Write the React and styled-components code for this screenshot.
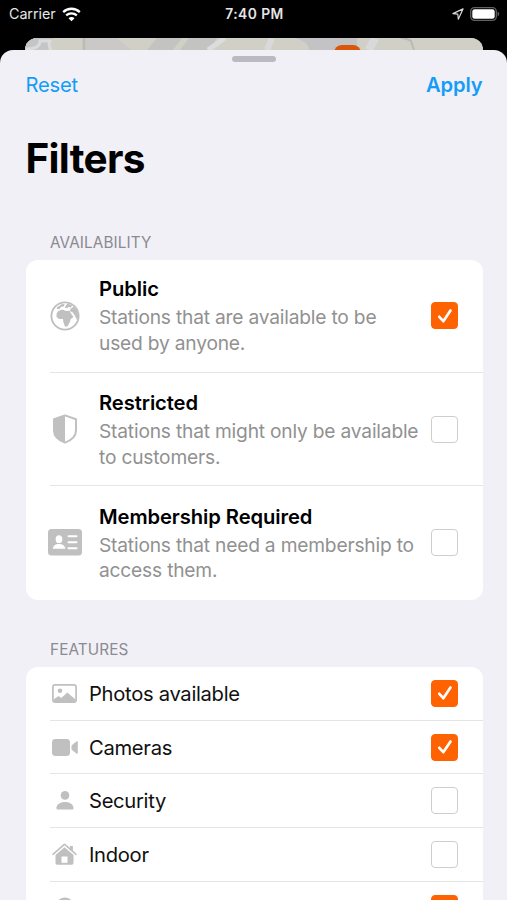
import styled, { createGlobalStyle } from "styled-components";

const GlobalStyle = createGlobalStyle`
  * {
    box-sizing: border-box;
  }

  body {
    margin: 0;
    background: #000;
    font-family: Inter, "Liberation Sans", sans-serif;
    overflow: hidden;
  }
`;

const Screen = styled.div`
  width: 507px;
  height: 900px;
  overflow: hidden;
  background: #000;
  display: flex;
  flex-direction: column;
`;

const StatusBar = styled.div`
  height: 38px;
  flex: none;
  padding: 4px 7px 0 9px;
  display: grid;
  grid-template-columns: 1fr auto 1fr;
  align-items: start;
  color: #e6e6e6;
  font-size: 14.3px;
  line-height: 20px;
`;

const Carrier = styled.div`
  display: flex;
  align-items: center;
  gap: 6px;
  letter-spacing: -0.05px;
`;

const Clock = styled.div`
  font-weight: 600;
  font-size: 13.8px;
  letter-spacing: 0.45px;
`;

const StatusIcons = styled.div`
  display: flex;
  align-items: center;
  justify-content: flex-end;
  gap: 6px;
  height: 19px;
`;

const MapStrip = styled.div`
  height: 24px;
  flex: none;
  margin: 0 24px 0 25px;
  border-radius: 12px 12px 0 0;
  overflow: hidden;
  background: #d3d3c8;
`;

const Sheet = styled.main`
  flex: 1;
  margin-top: -12px;
  min-height: 0;
  position: relative;
  background: #f1f0f6;
  border-radius: 13px 13px 0 0;
  padding: 6px 24.5px 0 25.5px;
  display: flex;
  flex-direction: column;
  overflow: hidden;
`;

const Grabber = styled.div`
  width: 44px;
  height: 6px;
  flex: none;
  border-radius: 3px;
  background: #bbbac2;
  align-self: center;
`;

const Toolbar = styled.div`
  display: flex;
  justify-content: space-between;
  height: 26px;
  margin-top: 10px;
  flex: none;
`;

const TextButton = styled.button`
  border: 0;
  padding: 0;
  background: none;
  font-family: inherit;
  font-size: 20.2px;
  line-height: 26px;
  color: #149cf8;
  font-weight: ${(props) => (props.$strong ? 600 : 400)};
  letter-spacing: ${(props) => (props.$strong ? "-0.15px" : "-0.2px")};
`;

const Title = styled.h1`
  margin: 35px 0 0;
  flex: none;
  font-size: 40.5px;
  line-height: 52px;
  font-weight: 700;
  letter-spacing: -0.7px;
`;

const SectionTitle = styled.h2`
  margin: ${(props) => props.$top}px 0 0 24.5px;
  height: 27px;
  flex: none;
  font-size: 15.3px;
  line-height: 20px;
  font-weight: 400;
  letter-spacing: 0.1px;
  color: #8b8a90;
`;

const Card = styled.div`
  flex: none;
  background: #fff;
  border-radius: 12px;
  padding-left: 24.5px;
`;

const Row = styled.label`
  display: flex;
  align-items: center;
  height: ${(props) => (props.$compact ? 53.7 : 113.4)}px;
  padding-right: 24.5px;
  border-bottom: 1px solid #e5e5e8;

  &:last-child {
    border-bottom: 0;
  }
`;

const IconSlot = styled.span`
  width: 29px;
  flex: none;
  display: flex;
  justify-content: center;
  color: #c0c0c0;
  margin-right: ${(props) => (props.$compact ? 10 : 20)}px;

  svg {
    flex: none;
  }
`;

const Texts = styled.span`
  flex: 1;
  min-width: 0;
  padding-top: 2px;
`;

const Name = styled.span`
  display: block;
  font-size: 20.2px;
  line-height: 26px;
  font-weight: 600;
  letter-spacing: -0.08px;
  margin-bottom: 3px;
`;

const Desc = styled.span`
  display: block;
  font-size: 19.2px;
  line-height: 25.7px;
  letter-spacing: -0.2px;
  color: #919191;
  white-space: pre;
`;

const Label = styled.span`
  flex: 1;
  font-size: 20.2px;
  line-height: 26px;
  padding-top: 1px;
  letter-spacing: -0.3px;
  color: #111;
`;

const Box = styled.span`
  width: 27px;
  height: 27px;
  flex: none;
  border-radius: 4px;
  border: 1.5px solid ${(props) => (props.$checked ? "#ff6200" : "#cecece")};
  background: ${(props) => (props.$checked ? "#ff6200" : "#fff")};
  display: flex;
  align-items: center;
  justify-content: center;
`;

const WifiIcon = () => (
  <svg width="19" height="15" viewBox="0 0 19 15" fill="none" stroke="#fff">
    <path d="M1.2 5.1a12 12 0 0 1 16.6 0" strokeWidth="2.3" />
    <path d="M4.2 8.4a7.7 7.7 0 0 1 10.6 0" strokeWidth="2.2" />
    <path d="M9.5 14.2 6.5 11.3a4.2 4.2 0 0 1 6 0z" fill="#fff" stroke="none" />
  </svg>
);

const LocationIcon = () => (
  <svg width="12" height="12" viewBox="0 0 12 12" fill="none">
    <path
      d="M11 .9.900 5.600l4.900.6.5 5z"
      stroke="#d8d8d8"
      strokeWidth="1.2"
      strokeLinejoin="round"
    />
  </svg>
);

const BatteryIcon = () => (
  <svg width="30" height="14" viewBox="0 0 30 14">
    <rect x=".7" y=".7" width="25.6" height="12.6" rx="3.8" fill="none" stroke="#626262" strokeWidth="1.3" />
    <rect x="2.3" y="2.3" width="22.4" height="9.4" rx="2.3" fill="#fff" />
    <path d="M27.6 4.6q1.7.9 1.7 2.4t-1.7 2.4z" fill="#626262" />
  </svg>
);

const MapArt = () => (
  <svg width="458" height="24" viewBox="0 0 458 24">
    <rect width="458" height="24" fill="#d0d0c6" />
    <path d="M0 0h28l-5 12H0z" fill="#c4c5c6" />
    <path d="M1 11q14 0 14-8h10q-2 4 1 9" fill="none" stroke="#dbdbdc" strokeWidth="3" />
    <path d="M61 0h30l16 12H61z" fill="#cac9c7" />
    <path d="M132 0h25l-9 12h-26zM164 0h28l-8 12h-29z" fill="#c3c3c2" />
    <path d="M59 0v12" stroke="#bcbcb7" strokeWidth="3" />
    <path d="m200 0-17 12" stroke="#dcdcdc" strokeWidth="5" />
    <path d="m247 0-5 12" stroke="#d9d9da" strokeWidth="6" />
    <path d="M270 0h62v12h-48q0-8-14-12z" fill="#c3c3c5" />
    <path d="m350 0-6 12" stroke="#d9d9dc" strokeWidth="8" />
    <path d="M376 0q8 1 10 3l3 9" fill="none" stroke="#b9b9b7" strokeWidth="2" />
    <rect x="309" y="7" width="27" height="17" rx="8" fill="#d9560b" />
  </svg>
);

const CheckMark = () => (
  <svg width="16" height="16" viewBox="0 0 16 16" fill="none">
    <path
      d="m2.3 8.800 4 4.400 7.200-10.700"
      stroke="#fff"
      strokeWidth="2.7"
      strokeLinecap="round"
      strokeLinejoin="round"
    />
  </svg>
);

const GlobeIcon = () => (
  <svg width="30" height="30" viewBox="0 0 30 30" fill="currentColor">
    <circle cx="15" cy="15" r="13.6" fill="none" stroke="currentColor" strokeWidth="1.9" />
    <path d="M8 10.200 11.200 8.800l2.600.3 1.900.9 3.800-.2 1.500 2.700 2.500 3.400-2.700 2.200-1 3.100-2.500 4.200-2.400.2-1.500-4.400-.4-3.300-4 .1-2.600-2.300.3-3.200z" />
    <path d="m7 6.200 5.500-3.500 2.300.8-1.300 2-2.600.5-1.400 2-2.700-.1zM15.500 5l2-2.400 4.700 1.600-1.300 2.200-2.400-.3-1.300 1.100-2.300-.5z" />
    <path d="m21 7.600 2.700-2.200 3.600 4.600 1.200 5-1.300 4.600-2.400-5.100-2.300-3.200-2.500-1.100.1-1.700z" />
  </svg>
);

const ShieldIcon = () => (
  <svg width="26" height="30" viewBox="0 0 26 30">
    <path
      d="M13 1.4 24 5.3v11.2c0 5.6-4.2 9.6-11 12.1C6.2 26.1 2 22.1 2 16.5V5.3z"
      fill="#fff"
      stroke="currentColor"
      strokeWidth="2"
      strokeLinejoin="round"
    />
    <path d="M13 1.4v27.2C6.2 26.1 2 22.1 2 16.5V5.3z" fill="currentColor" />
  </svg>
);

const CardIcon = () => (
  <svg width="34" height="27" viewBox="0 0 34 27">
    <rect width="34" height="26.5" rx="3.5" fill="currentColor" />
    <g fill="#fff">
      <ellipse cx="11" cy="10.2" rx="3.3" ry="3.9" />
      <path d="M4.800 19.800c.3-3.200 3-4.300 4.700-4.700h3c1.700.4 4.500 1.500 4.800 4.700z" />
      <rect x="19.5" y="6.3" width="10" height="2" rx="1" />
      <rect x="19.5" y="12.3" width="10" height="2" rx="1" />
      <rect x="19.5" y="18.2" width="10" height="2" rx="1" />
    </g>
  </svg>
);

const PhotoIcon = () => (
  <svg width="25" height="19" viewBox="0 0 25 19">
    <rect x=".9" y=".9" width="23.2" height="17.2" rx="2.2" fill="none" stroke="currentColor" strokeWidth="1.7" />
    <circle cx="8" cy="6.8" r="2.3" fill="currentColor" />
    <path d="M1.5 15.500 6.500 12l2.800 2 6-5.600 8.200 7V18h-22z" fill="currentColor" />
  </svg>
);

const VideoIcon = () => (
  <svg width="26" height="17" viewBox="0 0 26 17" fill="currentColor">
    <rect width="18" height="17" rx="3.4" />
    <path d="M19.500 6.600 24.300 2.500q1.500-.9 1.500.7v10.600q0 1.600-1.500.7l-4.800-4.100z" />
  </svg>
);

const PersonIcon = () => (
  <svg width="18" height="19" viewBox="0 0 18 19" fill="currentColor">
    <circle cx="9" cy="4.4" r="4.3" />
    <path d="M.4 17.200C.6 13.500 4 11 9 11s8.400 2.500 8.600 6.200q0 1.400-1.400 1.400H1.800q-1.400 0-1.400-1.400z" />
  </svg>
);

const HouseIcon = () => (
  <svg width="25" height="22" viewBox="0 0 25 22">
    <path d="M17.900 3h3v6l-3-2.600z" fill="currentColor" />
    <path
      d="m1 11.300 10.700-9.500q.8-.7 1.600 0L24 11.300"
      fill="none"
      stroke="currentColor"
      strokeWidth="1.6"
      strokeLinecap="round"
    />
    <path
      d="M12.500 4.200 21.500 12v8q0 1.700-1.700 1.700h-4.300v-8.200h-6v8.200H5.200q-1.700 0-1.700-1.700v-8z"
      fill="currentColor"
    />
    <path d="M9 19.800h7v1.900H9z" fill="currentColor" />
  </svg>
);

const PinIcon = () => (
  <svg width="18" height="24" viewBox="0 0 18 24" fill="currentColor">
    <path d="M9 .5c5 0 8.500 3.600 8.500 8.300C17.500 14 12 20 9 23.500 6 20 .5 14 .5 8.800.5 4.100 4 .5 9 .5z" />
  </svg>
);

const availability = [
  {
    name: "Public",
    desc: "Stations that are available to be\nused by anyone.",
    icon: <GlobeIcon />,
    checked: true,
  },
  {
    name: "Restricted",
    desc: "Stations that might only be available\nto customers.",
    icon: <ShieldIcon />,
  },
  {
    name: "Membership Required",
    desc: "Stations that need a membership to\naccess them.",
    icon: <CardIcon />,
  },
];

const features = [
  { name: "Photos available", icon: <PhotoIcon />, checked: true },
  { name: "Cameras", icon: <VideoIcon />, checked: true },
  { name: "Security", icon: <PersonIcon /> },
  { name: "Indoor", icon: <HouseIcon /> },
  { name: "", icon: <PinIcon />, checked: true },
];

const Checkbox = ({ checked }) => (
  <Box $checked={checked}>{checked && <CheckMark />}</Box>
);

const App = () => {
  return (
    <>
      <GlobalStyle />
      <Screen>
        <StatusBar>
          <Carrier>
            Carrier <WifiIcon />
          </Carrier>
          <Clock>7:40 PM</Clock>
          <StatusIcons>
            <LocationIcon />
            <BatteryIcon />
          </StatusIcons>
        </StatusBar>
        <MapStrip>
          <MapArt />
        </MapStrip>
        <Sheet>
          <Grabber />
          <Toolbar>
            <TextButton>Reset</TextButton>
            <TextButton $strong>Apply</TextButton>
          </Toolbar>
          <Title>Filters</Title>
          <SectionTitle $top={47.5}>AVAILABILITY</SectionTitle>
          <Card>
            {availability.map((item) => (
              <Row key={item.name}>
                <IconSlot>{item.icon}</IconSlot>
                <Texts>
                  <Name>{item.name}</Name>
                  <Desc>{item.desc}</Desc>
                </Texts>
                <Checkbox checked={item.checked} />
              </Row>
            ))}
          </Card>
          <SectionTitle $top={40.3}>FEATURES</SectionTitle>
          <Card>
            {features.map((item) => (
              <Row key={item.name} $compact>
                <IconSlot $compact>{item.icon}</IconSlot>
                <Label>{item.name}</Label>
                <Checkbox checked={item.checked} />
              </Row>
            ))}
          </Card>
        </Sheet>
      </Screen>
    </>
  );
};

export default App;
